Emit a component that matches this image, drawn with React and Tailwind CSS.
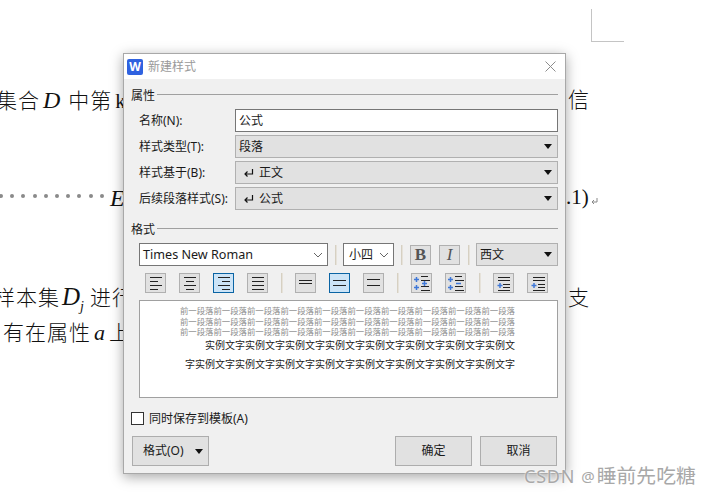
import React from 'react';

const ui = "font-['Noto_Sans','Noto_Sans_CJK_SC',sans-serif]";
const doc = "font-['Liberation_Serif','Noto_Sans_CJK_SC',serif]";

const Caret = () => (
  <svg width="8" height="5" viewBox="0 0 8 5" className="shrink-0">
    <path d="M0 0h8L4 5z" fill="#111" />
  </svg>
);

const Chevron = () => (
  <svg width="10" height="6" viewBox="0 0 10 6" className="shrink-0">
    <path d="M1 1l4 4 4-4" fill="none" stroke="#666" />
  </svg>
);

const ReturnMark = () => (
  <svg width="11" height="10" viewBox="0 0 11 10" className="shrink-0 ml-[4px]">
    <path d="M9.5 1v5H2M4.5 3.5L2 6l2.5 2.5" fill="none" stroke="#111" strokeWidth="1.2" />
  </svg>
);

const Sep = () => <div className="w-[1px] h-[20px] bg-[#d6d0c2] shadow-[1px_0_0_#e6e2da] shrink-0" />;

const Combo = ({ children, className = 'flex-1' }) => (
  <div className={`h-[23px] border border-[#b0b0b0] bg-[#e1e1e1] flex items-center pl-[3px] pr-[5px] ${className}`}>
    <div className="flex-1 flex items-center gap-[5px]">{children}</div>
    <Caret />
  </div>
);

const Row = ({ label, children }) => (
  <div className="flex items-center h-[23px] pl-[8px]">
    <div className="w-[96px] shrink-0">{label}</div>
    {children}
  </div>
);

const Legend = ({ children }) => (
  <div className="flex items-center h-[16px]">
    <span className="mr-[2px] mt-[1px]">{children}</span>
    <div className="flex-1 h-[1px] bg-[#a0a0a0] -mt-[2px]" />
  </div>
);

const Lines = ({ rows }) => (
  <svg width="15" height="15" viewBox="0 0 15 15">
    {rows.map(([x1, x2, y], i) => (
      <path key={i} d={`M${x1} ${y + 0.5}H${x2}`} stroke="#222" />
    ))}
  </svg>
);

const ToolBtn = ({ children, active }) => (
  <div className={`w-[21px] h-[20px] shrink-0 flex items-center justify-center border ${active ? 'border-[#0a64a4] bg-[#cce4f7]' : 'border-[#b0b0b0] bg-[#e1e1e1]'}`}>
    {children}
  </div>
);

const ParaIcon = ({ minus }) => (
  <svg width="17" height="15" viewBox="0 0 17 15">
    <path d="M8 0.5h7M8 4.5h9M8 10.5h8M8 14.5h9" stroke="#222" />
    <path d="M1 3.5h5M3.5 1v5M1 11.5h5M3.5 9v5" stroke="#3f78d8" strokeWidth="1.5" />
    <path d={minus ? 'M9 7.5h5' : 'M9 7.5h5M11.5 5v5'} stroke="#3f78d8" strokeWidth="1.5" />
  </svg>
);

const IndentIcon = ({ left, plus, mid }) => (
  <svg width="17" height="15" viewBox="0 0 17 15">
    <path d={`M${left} 1.5h12M${left} 4.5h12M${mid} 8.5H${left + 12}M${mid} 11.5H${left + 12}M${left} 14.5h12`} stroke="#222" />
    <path d={`M${plus - 2.5} 9.5h5M${plus} 7v5`} stroke="#3f78d8" strokeWidth="1.5" />
  </svg>
);

const Button = ({ children, className = 'justify-center' }) => (
  <div className={`w-[77px] h-[30px] border border-[#adadad] bg-[#e1e1e1] flex items-center ${className}`}>
    {children}
  </div>
);

const prevLine = '前一段落'.repeat(10);
const sampleA = '实例文字'.repeat(7) + '实例文';
const sampleB = '字' + '实例文字'.repeat(8);

export default function App() {
  return (
    <div className="relative w-[711px] h-[494px] overflow-hidden bg-white">
      {/* document behind the dialog */}
      <div className={`${doc} text-[21px] leading-[28px] text-[#111] font-light tracking-[1px]`}>
        <div className="absolute -left-[4px] top-[86px] whitespace-nowrap">
          集合<i className="ml-[3px] mr-[8px] text-[24px] tracking-normal">D</i>中第<span className="ml-[3px]">k</span>
        </div>
        <div className="absolute left-[568px] top-[86px]">信</div>
        <div className="absolute -left-[1px] top-[194px] flex gap-[7.2px]">
          {Array.from({ length: 10 }).map((_, i) => (
            <span key={i} className="w-[4px] h-[4px] rounded-full bg-[#8a8a8a]" />
          ))}
        </div>
        <div className="absolute left-[110px] top-[184px] text-[24px]"><i>E</i></div>
        <div className="absolute left-[566px] top-[183px] flex items-center whitespace-nowrap tracking-normal">
          .1)
          <svg width="7" height="7" viewBox="0 0 7 7" className="mt-[8px] ml-[2px]">
            <path d="M6 0v4H1M3 2L1 4l2 2" fill="none" stroke="#888" />
          </svg>
        </div>
        <div className="absolute -left-[6px] top-[283px] whitespace-nowrap">
          样本集<i className="ml-[2px] text-[25px] tracking-normal">D</i><i className="relative top-[6px] text-[14px] mr-[5px]">j</i>进行
        </div>
        <div className="absolute left-[568px] top-[284px]">支</div>
        <div className="absolute left-[3px] top-[319px] whitespace-nowrap">
          有在属性<i className="ml-[3px] mr-[4px] text-[22px] tracking-normal">a</i>上
        </div>
      </div>

      {/* page corner mark */}
      <div className="absolute left-[591px] top-[9px] w-[33px] h-[33px] border-l border-b border-[#c4c4c4]" />

      {/* dialog */}
      <div className={`${ui} absolute left-[123px] top-[53px] w-[443px] h-[421px] border border-[#a8a8a8] bg-[#f0f0f0] shadow-[0_3px_12px_rgba(0,0,0,0.35)] text-[12px] leading-[16px] text-[#1a1a1a]`}>
        <div className="h-[25px] bg-white flex items-center pl-[3px] pr-[9px]">
          <div className="w-[16px] h-[16px] rounded-[2px] bg-[#2f62e0] flex items-center justify-center text-white text-[12px] font-bold">W</div>
          <span className="ml-[5px] text-[#9a9a9a] flex-1">新建样式</span>
          <svg width="11" height="11" viewBox="0 0 11 11">
            <path d="M0.5 0.5l10 10M10.5 0.5l-10 10" stroke="#8c8c8c" />
          </svg>
        </div>

        <div className="pl-[7px] pr-[7px]">
          <div className="pt-[8px] mb-[6px]">
            <Legend>属性</Legend>
          </div>
          <div className="flex flex-col gap-[3px]">
            <Row label="名称(N):">
              <div className="flex-1 h-[23px] border border-[#767676] bg-white flex items-center pl-[3px]">公式</div>
            </Row>
            <Row label="样式类型(T):">
              <Combo>段落</Combo>
            </Row>
            <Row label="样式基于(B):">
              <Combo><ReturnMark />正文</Combo>
            </Row>
            <Row label="后续段落样式(S):">
              <Combo><ReturnMark />公式</Combo>
            </Row>
          </div>

          <div className="mt-[11px] mb-[6px]">
            <Legend>格式</Legend>
          </div>
          <div className="flex items-center h-[23px] pl-[8px]">
            <div className="w-[189px] h-[23px] border border-[#767676] bg-white flex items-center justify-between pl-[3px] pr-[4px] text-[12.6px]">
              Times New Roman
              <Chevron />
            </div>
            <div className="ml-[7px]"><Sep /></div>
            <div className="ml-[7px] w-[51px] h-[23px] border border-[#767676] bg-white flex items-center justify-between pl-[5px] pr-[4px]">
              小四
              <Chevron />
            </div>
            <div className="ml-[7px]"><Sep /></div>
            <div className="ml-[8px]">
              <ToolBtn><span className="font-['Liberation_Serif',serif] text-[17px] font-bold text-[#555]">B</span></ToolBtn>
            </div>
            <div className="ml-[8px]">
              <ToolBtn><span className="font-['Liberation_Serif',serif] text-[17px] italic text-[#555]">I</span></ToolBtn>
            </div>
            <div className="ml-[8px]"><Sep /></div>
            <div className="ml-[7px] flex-1">
              <Combo className="w-full">西文</Combo>
            </div>
          </div>

          <div className="mt-[7px] flex items-center gap-[13px] pl-[14px] h-[20px]">
            <ToolBtn><Lines rows={[[2, 14, 1], [2, 10, 5], [2, 14, 9], [2, 10, 13]]} /></ToolBtn>
            <ToolBtn><Lines rows={[[2, 14, 1], [4, 12, 5], [2, 14, 9], [4, 12, 13]]} /></ToolBtn>
            <ToolBtn active><Lines rows={[[2, 14, 1], [6, 14, 5], [2, 14, 9], [6, 14, 13]]} /></ToolBtn>
            <ToolBtn><Lines rows={[[2, 14, 1], [2, 14, 5], [2, 14, 9], [2, 14, 13]]} /></ToolBtn>
            <Sep />
            <ToolBtn><Lines rows={[[1, 14, 4], [1, 14, 7]]} /></ToolBtn>
            <ToolBtn active><Lines rows={[[1, 14, 4], [1, 14, 9]]} /></ToolBtn>
            <ToolBtn><Lines rows={[[1, 14, 3], [1, 14, 9]]} /></ToolBtn>
            <Sep />
            <ToolBtn><ParaIcon /></ToolBtn>
            <ToolBtn><ParaIcon minus /></ToolBtn>
            <Sep />
            <ToolBtn><IndentIcon left={3} plus={5} mid={8} /></ToolBtn>
            <ToolBtn><IndentIcon left={4} plus={5} mid={9} /></ToolBtn>
          </div>

          <div className="mt-[7px] ml-[8px] h-[98px] border border-[#a0a0a0] bg-white flex flex-col items-end pr-[42px] pt-[5px] overflow-hidden whitespace-nowrap">
            <div className="text-[8.4px] leading-[10.5px] text-[#8c8c8c]">{prevLine}</div>
            <div className="text-[8.4px] leading-[10.5px] text-[#8c8c8c]">{prevLine}</div>
            <div className="text-[8.4px] leading-[10.5px] text-[#8c8c8c]">{prevLine}</div>
            <div className="mt-[1px] text-[10px] leading-[13px]">{sampleA}</div>
            <div className="mt-[6px] text-[10px] leading-[13px]">{sampleB}</div>
          </div>

          <div className="mt-[14px] flex items-center h-[13px]">
            <div className="w-[13px] h-[13px] border border-[#333] bg-white" />
            <span className="ml-[5px]">同时保存到模板(A)</span>
          </div>

          <div className="mt-[11px] flex items-center px-[1px]">
            <Button className="pl-[10px] gap-[11px]">
              <span>格式(O)</span>
              <Caret />
            </Button>
            <div className="flex-1" />
            <Button>确定</Button>
            <Button className="ml-[8px] justify-center">取消</Button>
          </div>
        </div>
      </div>

      {/* watermark */}
      <div className={`${ui} absolute left-[524px] top-[464px] flex items-center h-[24px] text-[18px] text-[#a8a8a8] whitespace-nowrap [text-shadow:0_0_2px_#fff]`}>
        <span className="tracking-[0.8px]">CSDN</span>
        <span className="ml-[6px] text-[15px]">@</span>
        <span className="ml-[2px] text-[19.8px]">睡前先吃糖</span>
      </div>
    </div>
  );
}
